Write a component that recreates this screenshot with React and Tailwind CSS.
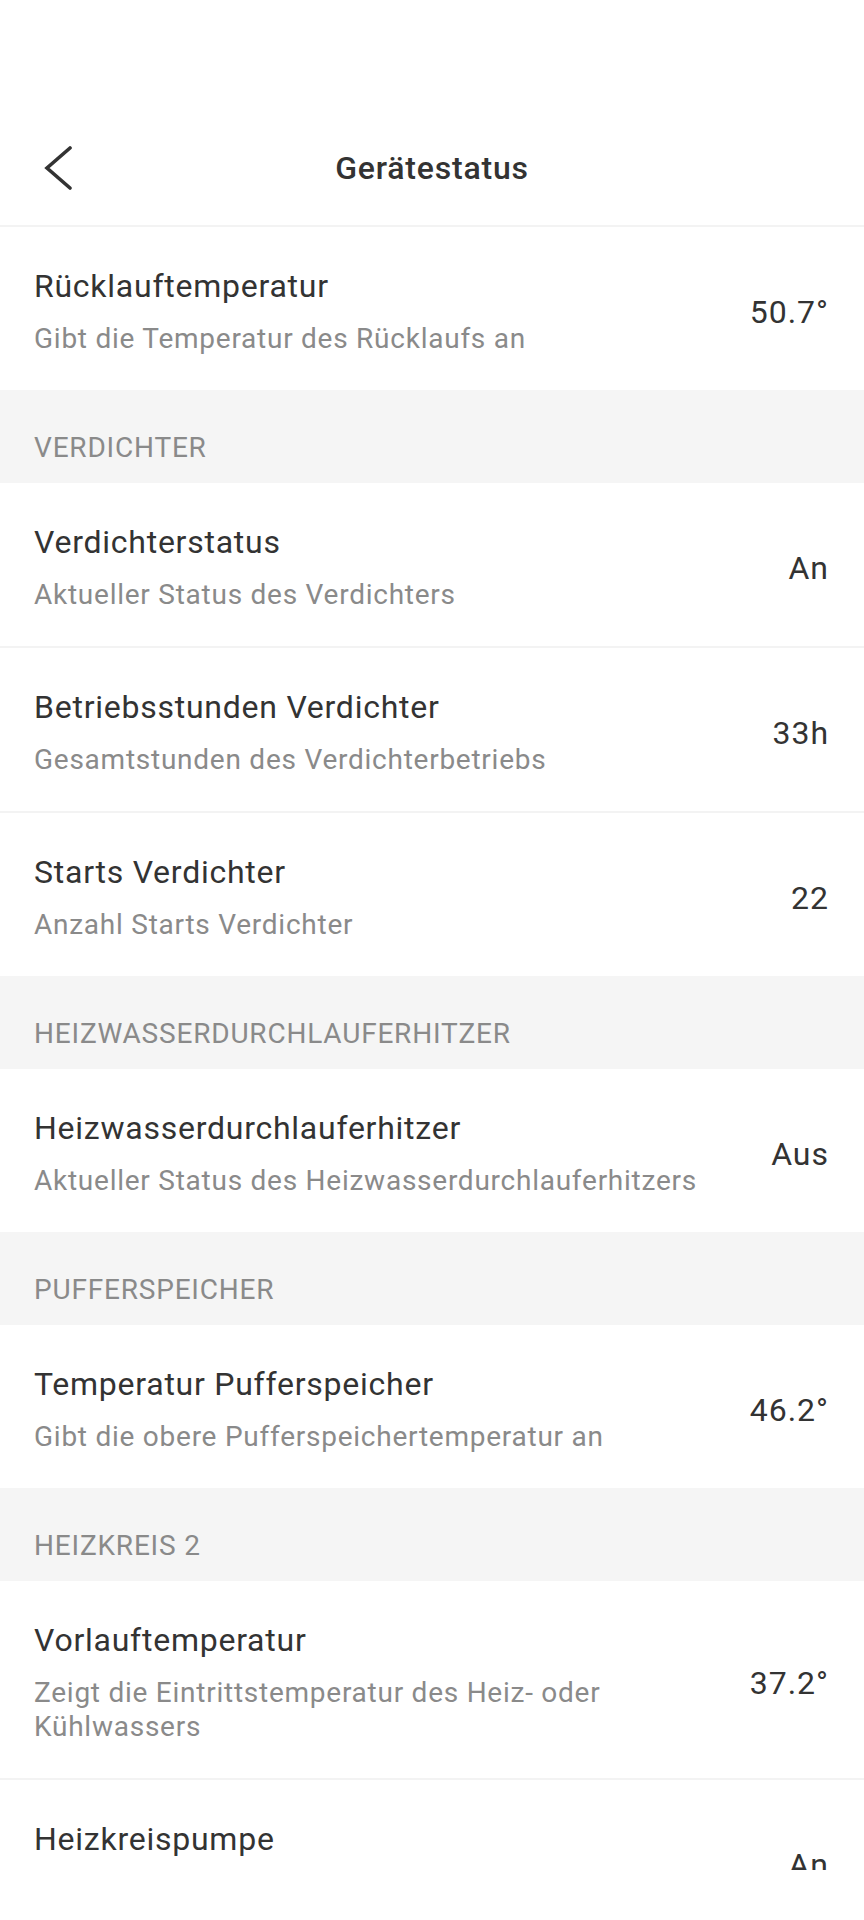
import React from "react";

const sections = [
  {
    title: null,
    rows: [
      {
        title: "Rücklauftemperatur",
        sub: "Gibt die Temperatur des Rücklaufs an",
        value: "50.7°",
      },
    ],
  },
  {
    title: "VERDICHTER",
    rows: [
      {
        title: "Verdichterstatus",
        sub: "Aktueller Status des Verdichters",
        value: "An",
      },
      {
        title: "Betriebsstunden Verdichter",
        sub: "Gesamtstunden des Verdichterbetriebs",
        value: "33h",
      },
      {
        title: "Starts Verdichter",
        sub: "Anzahl Starts Verdichter",
        value: "22",
      },
    ],
  },
  {
    title: "HEIZWASSERDURCHLAUFERHITZER",
    rows: [
      {
        title: "Heizwasserdurchlauferhitzer",
        sub: "Aktueller Status des Heizwasserdurchlauferhitzers",
        value: "Aus",
      },
    ],
  },
  {
    title: "PUFFERSPEICHER",
    rows: [
      {
        title: "Temperatur Pufferspeicher",
        sub: "Gibt die obere Pufferspeichertemperatur an",
        value: "46.2°",
      },
    ],
  },
  {
    title: "HEIZKREIS 2",
    rows: [
      {
        title: "Vorlauftemperatur",
        sub: "Zeigt die Eintrittstemperatur des Heiz- oder Kühlwassers",
        value: "37.2°",
      },
      {
        title: "Heizkreispumpe",
        sub: "Aktueller Status der Heizkreispumpe",
        value: "An",
      },
    ],
  },
];

const Row = ({ row, first }) => (
  <div
    className={`flex items-center pl-[34px] pr-[35px] pt-[40px] pb-[34px] ${
      first ? "" : "border-t-2 border-[#f3f3f3]"
    }`}
  >
    <div className="flex-1 mr-[30px] flex flex-col gap-[17px]">
      <div className="text-[32px] leading-[38px] tracking-[0.75px] text-[#333333]">
        {row.title}
      </div>
      <div className="text-[28px] leading-[34px] tracking-[0.75px] text-[#8a8a8a]">
        {row.sub}
      </div>
    </div>
    <div className="text-[32px] leading-[38px] tracking-[1px] text-[#333333] whitespace-nowrap">
      {row.value}
    </div>
  </div>
);

const App = () => {
  return (
    <div className="w-[864px] h-[1920px] bg-white flex flex-col font-['Roboto',sans-serif] overflow-hidden">
      {/* status bar space */}
      <div className="h-[111px] shrink-0" />

      {/* Header */}
      <div className="relative h-[116px] shrink-0 flex items-center justify-center border-b-2 border-[#f3f3f3]">
        <button className="absolute left-[44px] top-1/2 -translate-y-1/2 p-0">
          <svg width="30" height="44" viewBox="0 0 30 44" fill="none">
            <polyline
              points="26,2 3,22 26,42"
              stroke="#333333"
              strokeWidth="3.6"
              strokeLinecap="round"
              strokeLinejoin="miter"
            />
          </svg>
        </button>
        <h1 className="text-[32px] font-medium tracking-[0.8px] text-[#333333]">
          Gerätestatus
        </h1>
      </div>

      {/* List */}
      <div className="flex-1 overflow-hidden">
        {sections.map((section, sIdx) => (
          <div key={sIdx}>
            {section.title && (
              <div className="h-[93px] bg-[#f5f5f5] pl-[34px] pt-[41px] text-[28px] leading-[34px] tracking-[0.8px] text-[#8a8a8a]">
                {section.title}
              </div>
            )}
            {section.rows.map((row, rIdx) => (
              <Row key={rIdx} row={row} first={rIdx === 0} />
            ))}
          </div>
        ))}
      </div>

      {/* navigation bar space */}
      <div className="h-[50px] shrink-0 bg-white" />
    </div>
  );
};

export default App;
